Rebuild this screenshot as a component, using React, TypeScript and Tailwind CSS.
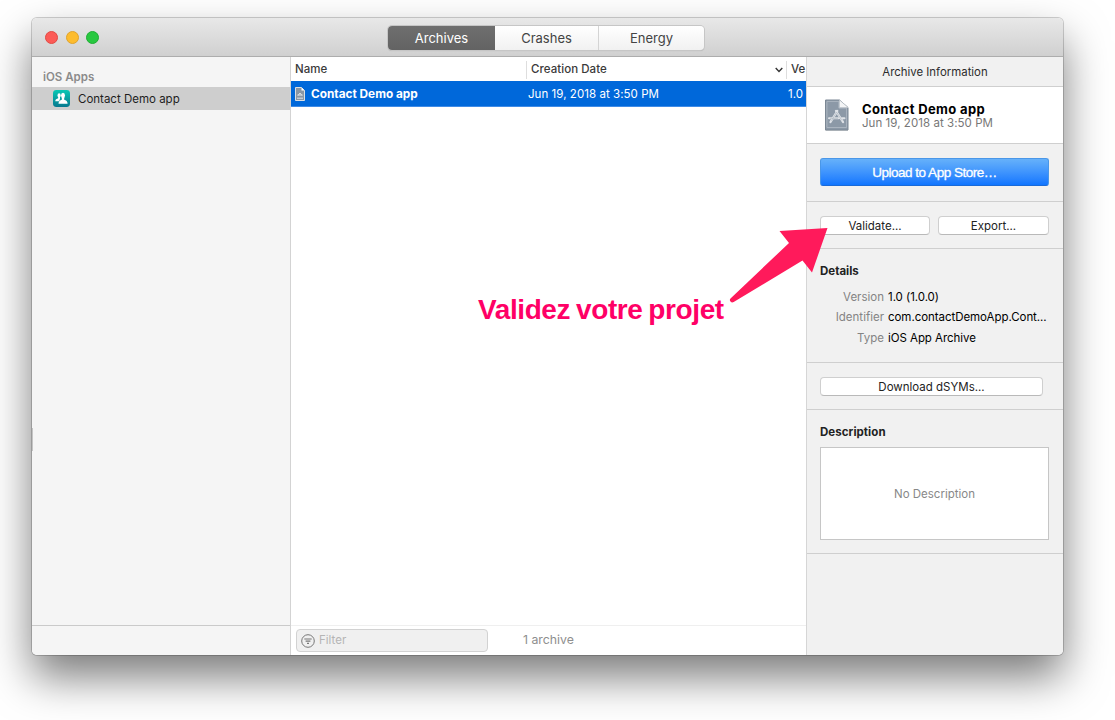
import type { ReactNode } from "react";

function PeopleIcon() {
  return (
    <svg className="h-[17px] w-[17px] shrink-0" viewBox="0 0 17 17">
      <defs>
        <linearGradient id="teal" x1="0" y1="0" x2="0" y2="1">
          <stop offset="0" stopColor="#08c8b4" />
          <stop offset="1" stopColor="#08798f" />
        </linearGradient>
      </defs>
      <rect width="17" height="17" rx="3.4" fill="url(#teal)" />
      <g fill="#fff">
        <ellipse cx="6.100" cy="5.400" rx="1.600" ry="2.100" />
        <path d="M2.300 11.300c0-1.900 1.200-2.500 2.900-3V6.500H7v2.200l-.8 2.600z" />
        <ellipse cx="10" cy="5.400" rx="2" ry="2.600" />
        <path d="M5.500 13.700c0-2.500 1.500-3.500 3.300-4V7h2.400v2.700c1.900.5 3.400 1.500 3.400 4z" />
      </g>
    </svg>
  );
}

function ArchiveIcon() {
  return (
    <svg className="h-[33px] w-[26px] shrink-0" viewBox="0 0 26 33">
      <path d="M1.500 2h14.500l8 7.500v22.500H1.500z" fill="#000" opacity=".15" />
      <path d="M1.500 1h14l8.500 7.500V31H1.500z" fill="#8c99a7" stroke="#7b8794" />
      <path d="M2.900 2.400h12v6.700h7.700v19.400H2.900z" fill="none" stroke="#b4bdc7" strokeWidth=".8" />
      <path d="M15.500 1v7.500H24z" fill="#f4f5f6" stroke="#c0c6cc" strokeWidth=".5" />
      <g stroke="#dfe3e8" strokeWidth="2.300" strokeLinecap="round" fill="none">
        <path d="M13.300 12 6.500 23M12 12l7 11" />
        <path d="M5 19.300h10M18 19.300h2.500" strokeWidth="2" />
      </g>
      <path d="m12.700 13-5.200 8.700M12.900 13.500l5 8M6 19.300h8" stroke="#a6b0bb" strokeWidth=".6" />
    </svg>
  );
}

function SmallArchiveIcon() {
  return (
    <svg className="h-[14px] w-[10px] shrink-0" viewBox="0 0 10 14">
      <path d="M.5.5h6l3 3v10h-9z" fill="#8996a4" stroke="#dcdfe2" />
      <path d="M6.500.5v3h3z" fill="#fff" />
      <path d="m3 8.500 2-2.500 2 2.500M2.500 8h5M2 11.200h6" stroke="#dfe3e7" fill="none" />
    </svg>
  );
}

function PushButton({ children, className }: { children: ReactNode; className: string }) {
  return (
    <button
      className={`flex h-[19px] items-center justify-center rounded-[4px] border border-[#cfcfcf] border-b-[#b9b9b9] bg-white pt-[2px] text-[11.5px] leading-[15px] text-[#222] ${className}`}
    >
      {children}
    </button>
  );
}

function Detail({ label, value }: { label: string; value: string }) {
  return (
    <div className="flex h-[20.700px] items-center gap-[4px]">
      <span className="w-[77px] text-right text-[11.5px] text-[#848484]">{label}</span>
      <span className="whitespace-nowrap text-[11.5px] tracking-[-0.05px] text-black">{value}</span>
    </div>
  );
}

export default function App() {
  return (
    <div className="relative h-[720px] w-[1115px] overflow-hidden bg-white pl-[32px] pt-[18px] font-['Inter',sans-serif] text-[11.5px] leading-none">
      <div className="flex h-[637px] w-[1031px] flex-col overflow-hidden rounded-[5px] bg-white shadow-[0_0_0_1px_rgba(0,0,0,0.18),0_22px_44px_rgba(0,0,0,0.52)]">
        <header className="flex h-[39px] shrink-0 items-center border-b border-[#adadad] bg-linear-to-b from-[#e8e8e8] to-[#d0d0d0]">
          <div className="ml-[13px] flex w-[343px] gap-[7.500px]">
            <span className="h-[13px] w-[13px] rounded-full border border-[#e24a43] bg-[#fc5b57]" />
            <span className="h-[13px] w-[13px] rounded-full border border-[#e0a32c] bg-[#fdbc2e]" />
            <span className="h-[13px] w-[13px] rounded-full border border-[#1fae33] bg-[#28c840]" />
          </div>
          <nav className="mt-px flex h-[24px] w-[316px] overflow-hidden rounded-[4px] bg-linear-to-b from-white to-[#f1f1f1] text-[13px] text-[#444] shadow-[0_0_0_1px_#c6c6c6,0_1px_1px_#aaa]">
            <button className="w-[107px] bg-linear-to-b from-[#6f6f6f] to-[#636363] pt-px text-white">Archives</button>
            <button className="w-[104px] border-r border-[#d4d4d4] pt-px">Crashes</button>
            <button className="w-[105px] pt-px">Energy</button>
          </nav>
        </header>
        <div className="flex min-h-0 flex-1">
          <aside className="flex w-[259px] shrink-0 flex-col border-r border-[#d3d3d3] bg-[#f5f5f5]">
            <h2 className="mt-[14px] pl-[11px] text-[11.5px] font-semibold leading-[13px] text-[#8b8b8b]">iOS Apps</h2>
            <div className="mt-[3px] flex h-[23px] items-center bg-[#cecece] pl-[21px]">
              <PeopleIcon />
              <span className="ml-[8px] pt-[2px] text-[11.500px] text-[#1e1e1e]">Contact Demo app</span>
            </div>
            <div className="mt-[318px] h-[23px] w-px bg-[#c4c4c4]" />
            <div className="mt-auto h-[30px] border-t border-[#cacaca]" />
          </aside>
          <main className="flex w-[515px] shrink-0 flex-col overflow-hidden bg-white">
            <div className="flex h-[24px] shrink-0 items-center pt-px text-[11.5px] font-medium text-[#3a3a3a]">
              <span className="w-[235px] pl-[4px]">Name</span>
              <span className="flex h-[18px] w-[260px] items-center justify-between border-l border-[#dedede] pl-[4px] pr-[3px] tracking-[0.050px]">
                Creation Date
                <svg className="h-[6px] w-[8px]" viewBox="0 0 8 6">
                  <path d="m.7 1 3.300 3.400L7.300 1" fill="none" stroke="#333" strokeWidth="1.400" />
                </svg>
              </span>
              <span className="flex h-[18px] items-center border-l border-[#dedede] pl-[4px]">Ve</span>
            </div>
            <div className="flex h-[26px] shrink-0 items-center border-b border-b-[#3f8be6] bg-[#0068da] pl-[4px] text-white">
              <SmallArchiveIcon />
              <span className="ml-[6px] w-[217px] pt-[3px] text-[11.800px] font-bold">Contact Demo app</span>
              <span className="w-[260px] pt-[3px] text-[11.5px] tracking-[0.050px]">Jun 19, 2018 at 3:50 PM</span>
              <span className="pt-[3px]">1.0</span>
            </div>
            <footer className="mt-auto flex h-[30px] items-center border-t border-[#efefef] pl-[5px]">
              <div className="flex h-[23px] w-[192px] items-center rounded-[4px] border border-[#d2d2d2] bg-[#f0f0f0] pl-[4px] text-[#b5b5b5]">
                <svg className="mr-[4px] h-[14px] w-[14px]" viewBox="0 0 14 14" fill="none" stroke="#777">
                  <circle cx="7" cy="7" r="6.300" />
                  <path d="M3.300 5h7.400M4.600 7.200h4.800M6 9.400h2" strokeWidth="1.200" />
                </svg>
                <span className="pt-px">Filter</span>
              </div>
              <span className="ml-[35px] text-[12.300px] text-[#8e8e8e]">1 archive</span>
            </footer>
          </main>
          <aside className="flex w-[257px] shrink-0 flex-col border-l border-[#d6d6d6] bg-[#f1f1f1]">
            <h2 className="flex h-[29px] items-center justify-center pt-[2px] text-[11.400px] text-[#2c2c2c]">
              Archive Information
            </h2>
            <section className="flex h-[58px] items-center border-y border-[#cfcfcf] bg-white pl-[17px]">
              <ArchiveIcon />
              <div className="ml-[12px] mt-[2px] flex flex-col">
                <span className="text-[13px] font-bold leading-[14px] tracking-[0.340px] text-black">Contact Demo app</span>
                <span className="text-[11.5px] leading-[14px] tracking-[0.050px] text-[#777]">Jun 19, 2018 at 3:50 PM</span>
              </div>
            </section>
            <section className="flex h-[58px] items-center border-b border-[#cfcfcf] pb-px pl-[13px]">
              <button className="h-[28px] w-[229px] rounded-[3px] border border-[#4a97e8] border-b-[#1a6ad8] bg-linear-to-b from-[#66b1fa] to-[#0f75ff] pt-[2px] font-['Liberation_Sans',sans-serif] text-[13.500px] tracking-[-0.500px] text-white [-webkit-text-stroke:0.300px_white]">
                Upload to App Store…
              </button>
            </section>
            <section className="flex h-[47px] items-center gap-[8px] border-b border-[#cfcfcf] pl-[13px]">
              <PushButton className="w-[110px]">Validate...</PushButton>
              <PushButton className="w-[111px]">Export...</PushButton>
            </section>
            <section className="h-[114px] border-b border-[#cfcfcf] pt-[16px]">
              <h3 className="mb-[9px] pl-[13px] text-[11.5px] font-bold leading-[13px] text-[#222]">Details</h3>
              <Detail label="Version" value="1.0 (1.0.0)" />
              <Detail label="Identifier" value="com.contactDemoApp.Cont..." />
              <Detail label="Type" value="iOS App Archive" />
            </section>
            <section className="flex h-[47px] items-center border-b border-[#cfcfcf] pl-[13px]">
              <PushButton className="w-[223px]">Download dSYMs...</PushButton>
            </section>
            <section className="h-[144px] border-b border-[#cfcfcf] px-[13px] pt-[16px]">
              <h3 className="text-[11.5px] font-bold leading-[13px] tracking-[0.050px] text-[#222]">Description</h3>
              <div className="mt-[8px] flex h-[93px] w-[229px] items-center justify-center border border-[#c6c6c6] bg-white pt-[2px] text-[#888]">
                No Description
              </div>
            </section>
          </aside>
        </div>
      </div>
      <svg className="absolute left-[725px] top-[222px] h-[84px] w-[108px]" viewBox="725 222 108 84">
        <path d="M827.500 228 779.500 231l9.500 12-58.500 55.500q-1.300 1.500 0 3t3.200.5L802.500 260.500l9.500 12z" fill="#ff1a5b" />
      </svg>
      <div className="absolute left-[478px] top-[294px] whitespace-nowrap font-['Liberation_Sans',sans-serif] text-[28px] font-bold leading-[32px] tracking-[-0.400px] text-[#ff0066] [word-spacing:-1.500px]">
        Validez votre projet
      </div>
    </div>
  );
}
